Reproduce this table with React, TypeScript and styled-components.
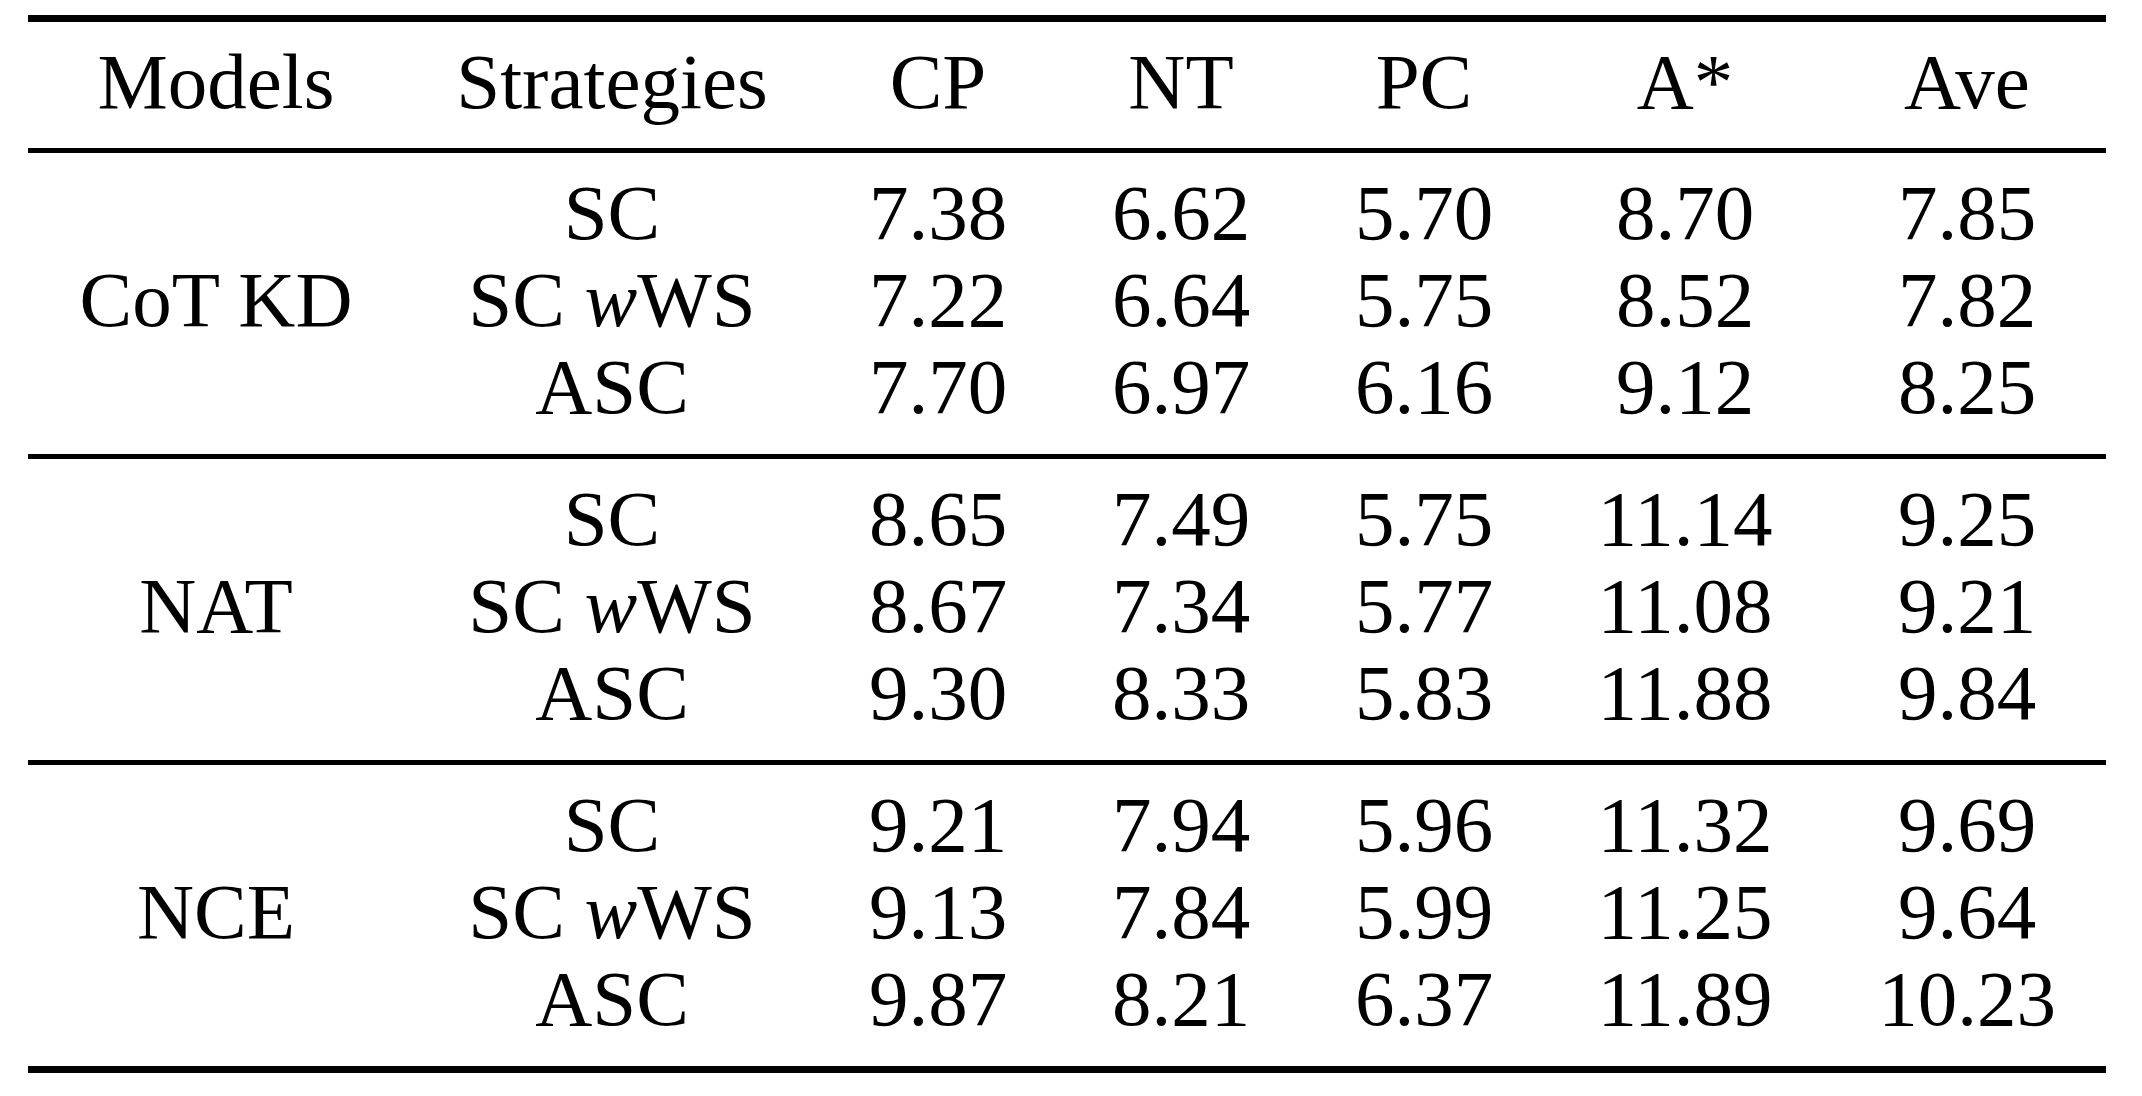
import React from "react";
import styled, { createGlobalStyle } from "styled-components";

const GlobalStyle = createGlobalStyle`
  html, body {
    margin: 0;
    padding: 0;
    background: #ffffff;
  }
  body {
    font-family: "Liberation Serif", "Times New Roman", serif;
    color: #000000;
  }
`;

const COLUMNS = "376px 416px 236px 250px 236px 286px 278px";

const Page = styled.div`
  padding: 15px 0 0 28px;
`;

const Table = styled.div`
  width: 2078px;
  display: flex;
  flex-direction: column;
`;

const Rule = styled.div<{ $thick?: boolean }>`
  height: ${(p) => (p.$thick ? 7 : 5)}px;
  background: #000;
`;

const HeaderRow = styled.div`
  display: grid;
  grid-template-columns: ${COLUMNS};
  padding: 16px 0 23px;
  font-size: 79px;
  line-height: 87px;
`;

const GroupBody = styled.div`
  display: grid;
  grid-template-columns: ${COLUMNS};
  grid-template-rows: repeat(3, 87px);
  grid-auto-flow: row;
  padding: 16px 0 24px;
  font-size: 79px;
  line-height: 87px;
`;

const Cell = styled.div`
  text-align: center;
  white-space: nowrap;
`;

const ModelCell = styled(Cell)`
  grid-column: 1;
  grid-row: 1 / span 3;
  align-self: center;
`;

const Italic = styled.span`
  font-style: italic;
`;

const strategyLabels: React.ReactNode[] = [
  "SC",
  <>
    SC <Italic>w</Italic>WS
  </>,
  "ASC",
];

const data: { model: string; values: string[][] }[] = [
  {
    model: "CoT KD",
    values: [
      ["7.38", "6.62", "5.70", "8.70", "7.85"],
      ["7.22", "6.64", "5.75", "8.52", "7.82"],
      ["7.70", "6.97", "6.16", "9.12", "8.25"],
    ],
  },
  {
    model: "NAT",
    values: [
      ["8.65", "7.49", "5.75", "11.14", "9.25"],
      ["8.67", "7.34", "5.77", "11.08", "9.21"],
      ["9.30", "8.33", "5.83", "11.88", "9.84"],
    ],
  },
  {
    model: "NCE",
    values: [
      ["9.21", "7.94", "5.96", "11.32", "9.69"],
      ["9.13", "7.84", "5.99", "11.25", "9.64"],
      ["9.87", "8.21", "6.37", "11.89", "10.23"],
    ],
  },
];

const headers = ["Models", "Strategies", "CP", "NT", "PC", "A*", "Ave"];

export default function App() {
  return (
    <>
      <GlobalStyle />
      <Page>
        <Table>
          <Rule $thick />
          <HeaderRow>
            {headers.map((h) => (
              <Cell key={h}>{h}</Cell>
            ))}
          </HeaderRow>
          {data.map((g) => (
            <React.Fragment key={g.model}>
              <Rule />
              <GroupBody>
                <ModelCell>{g.model}</ModelCell>
                {g.values.map((vals, ri) => (
                  <React.Fragment key={ri}>
                    <Cell>{strategyLabels[ri]}</Cell>
                    {vals.map((v, ci) => (
                      <Cell key={ci}>{v}</Cell>
                    ))}
                  </React.Fragment>
                ))}
              </GroupBody>
            </React.Fragment>
          ))}
          <Rule $thick />
        </Table>
      </Page>
    </>
  );
}
